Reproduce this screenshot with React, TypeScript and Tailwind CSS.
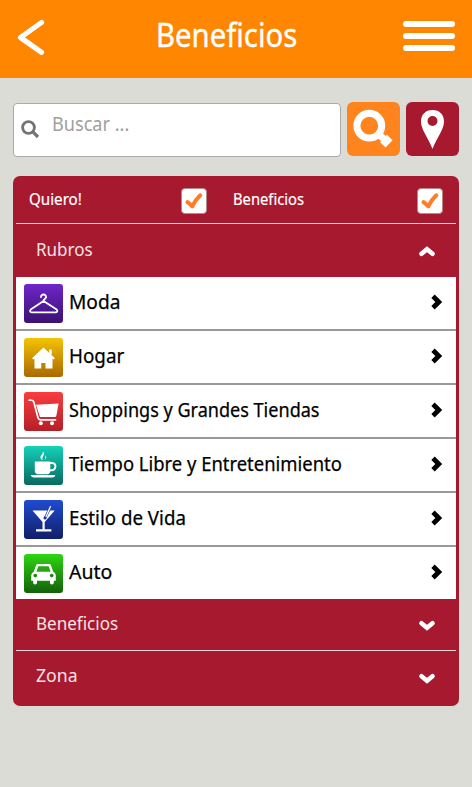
import { useLayoutEffect, useRef, useState, type ReactNode } from "react";

function Fit({ width, className, children }: { width: number; className: string; children: string }) {
  const ref = useRef<HTMLSpanElement>(null);
  const [scale, setScale] = useState(1);
  useLayoutEffect(() => {
    if (ref.current) setScale(width / ref.current.offsetWidth);
  }, [width]);
  return (
    <span
      ref={ref}
      className={`inline-block origin-left whitespace-nowrap [font-variant-ligatures:none] ${className}`}
      style={{ transform: `scaleX(${scale})` }}
    >
      {children}
    </span>
  );
}

function Check() {
  return (
    <span className="flex h-[26px] w-[26px] items-center justify-center rounded-[4px] border border-[#b98a86] bg-white">
      <svg width="20" height="20" viewBox="0 0 20 20" fill="none" stroke="#ff7d27" strokeWidth="4" strokeLinecap="round" strokeLinejoin="round">
        <path d="M3.500 11 8.300 15.200" />
        <path d="M8.300 15.200C10 11.500 12.500 8 16.300 4.300" />
      </svg>
    </span>
  );
}

function Chevron({ up = false }: { up?: boolean }) {
  return (
    <svg className={up ? "rotate-180" : ""} width="18" height="12" viewBox="0 0 18 12" fill="none" stroke="#fff" strokeWidth="4.600" strokeLinecap="round">
      <path d="M3.500 3.300 9 7.800 14.500 3.300" />
    </svg>
  );
}

const hanger = (
  <g fill="none" stroke="#fff" strokeWidth="1.8" strokeLinecap="round" strokeLinejoin="round">
    <path d="M17 13c.2-3.600 5.400-3.100 5.100.2-.2 1.900-2.600 1.900-2.600 3.800" />
    <path d="M19.500 17 6.700 25.600c-1.200 1-.7 2.700.8 2.700h24.400c1.500 0 2-1.700.8-2.700L19.500 17Z" />
  </g>
);
const house = (
  <g fill="#fff">
    <path d="M19.500 9.500 31 20.200l-1.500 1.400-10-8.600-10 8.600L8 20.200Z" />
    <path d="M10.500 18.800 19.500 11l9 7.800V30.500h-7v-5.600h-4.300v5.600h-6.700Z" />
    <path d="M25.200 11.500h2.600v5h-2.600Z" />
  </g>
);
const cart = (
  <g fill="#fff">
    <path d="M12 12.800 34.600 11.500l-2.200 12c-.2 1-1 1.600-2 1.600H16Z" />
    <path d="M5.200 8.200h2c1.500 0 2.200.5 2.600 1.900l4.200 15.600c.4 1.400 1.100 2.200 2.500 2.200h15" fill="none" stroke="#fff" strokeWidth="1.700" strokeLinecap="round" />
    <circle cx="16.800" cy="31.200" r="2" />
    <circle cx="28" cy="31.200" r="2" />
  </g>
);
const cup = (
  <g fill="#fff">
    <path d="M10.800 15.500h15.500v9.200c0 2.200-1.200 3.500-3.400 3.500h-8.700c-2.200 0-3.400-1.300-3.400-3.500Z" />
    <path d="M26 17.100h2.300c4.500 0 3.900 7.100-.8 7.100H26" fill="none" stroke="#fff" strokeWidth="2" />
    <path d="M6.800 29h24.600c-.3 1.600-1.300 2.400-3 2.400H10c-1.800 0-3-.8-3.200-2.400Z" />
    <path d="M18.700 14.200c-3.900-2.400-1.700-4.700-.4-6.300.7-1 .6-1.800.4-2.700 2 1.800 1.300 3.200.5 4.800-.8 1.400-1.200 2.500-.5 4.200Z" />
    <path d="M20.100 13.800c2-1.500 1.300-3 1-4.300 1.700 1.400 1.800 3.200-1 4.300Z" />
  </g>
);
const martini = (
  <g fill="#fff">
    <path d="M8.500 10.500h22.200L20.700 22v7.300h6.700v2.200H12v-2.200h6.500V22Z" />
    <path d="m20.800 18.500 5-10" fill="none" stroke="#1d3eb0" strokeWidth="2.600" />
    <path d="m21.800 17 4.800-10.800" fill="none" stroke="#fff" strokeWidth="1.300" />
    <circle cx="21" cy="18" r="1.500" fill="#1b369f" />
  </g>
);
const car = (
  <g>
    <path fill="#fff" d="M12 11.500c.4-1.100 1.100-1.500 2.200-1.500h10.600c1.100 0 1.800.4 2.200 1.500l2.300 6.500c1.600.7 2.500 1.900 2.500 3.700v5.100h-2v2c0 2.200-3.800 2.200-3.800 0v-2H13v2c0 2.200-3.800 2.200-3.800 0v-2h-2v-5.100c0-1.800.9-3 2.500-3.700Z" />
    <path fill="#23a713" d="m14.300 12.200-1.900 5.500h14.200l-1.900-5.500Z" />
    <circle cx="11.300" cy="21.600" r="1.800" fill="#1d8610" />
    <circle cx="27.700" cy="21.600" r="1.800" fill="#1d8610" />
  </g>
);

const rows: { label: string; width: number; tile: string; icon: ReactNode }[] = [
  { label: "Moda", width: 51, tile: "from-[#7025cb] to-[#3b1172]", icon: hanger },
  { label: "Hogar", width: 55, tile: "from-[#f4c400] to-[#ab6900]", icon: house },
  { label: "Shoppings y Grandes Tiendas", width: 251, tile: "from-[#fa3d40] to-[#b51f27]", icon: cart },
  { label: "Tiempo Libre y Entretenimiento", width: 273, tile: "from-[#15d2bb] to-[#086b5f]", icon: cup },
  { label: "Estilo de Vida", width: 117, tile: "from-[#204bd2] to-[#101f68]", icon: martini },
  { label: "Auto", width: 43, tile: "from-[#2ed711] to-[#14620a]", icon: car },
];

export default function App() {
  return (
    <div className="flex h-[787px] w-[472px] flex-col bg-[#dbdcd6] font-['Noto_Sans',sans-serif]">
      <header className="flex h-[78px] shrink-0 bg-[#ff8600] text-white">
        <svg className="mt-[18px] ml-4" width="30" height="40" viewBox="0 0 30 40" fill="none" stroke="#fff" strokeWidth="5.200" strokeLinecap="round" strokeLinejoin="round">
          <path d="M25.500 4.500 4.500 19.500l21 14.800" />
        </svg>
        <div className="ml-[110px] w-[247px]">
          <Fit width={141} className="text-[32px] leading-[69px] [-webkit-text-stroke:0.4px_white]">Beneficios</Fit>
        </div>
        <div className="mt-[21px] flex flex-col gap-[6px]">
          <span className="h-[6px] w-[52px] rounded-full bg-white" />
          <span className="h-[6px] w-[52px] rounded-full bg-white" />
          <span className="h-[6px] w-[52px] rounded-full bg-white" />
        </div>
      </header>

      <div className="mt-[24px] ml-[13px] flex h-[55px] shrink-0">
        <div className="mt-px flex h-[54px] w-[328px] rounded-[4px] border border-[#aaa] bg-white">
          <svg className="mt-[16px] ml-[7px] shrink-0" width="20" height="20" viewBox="0 0 20 20" fill="none" stroke="#747474">
            <circle cx="7.500" cy="7.500" r="5.900" strokeWidth="2.800" />
            <path d="m11.700 11.700 5.300 5.300" strokeWidth="3.200" />
          </svg>
          <div className="ml-[11px]">
            <Fit width={77} className="text-[20px] leading-[40px] text-[#a0a0a0]">Buscar ...</Fit>
          </div>
        </div>
        <button className="ml-[6px] flex h-[54px] w-[53px] rounded-[6px] bg-[#ff841d]">
          <svg width="53" height="54" viewBox="0 0 53 54" fill="none" stroke="#fff">
            <circle cx="22.300" cy="23.700" r="12.400" strokeWidth="7" />
            <path d="m31 31.500 8 7.500" strokeWidth="7" />
            <path d="m36.500 36.500 5.600 5.300" strokeWidth="10" />
          </svg>
        </button>
        <button className="ml-[6px] flex h-[54px] w-[53px] rounded-[6px] bg-[#a6192e]">
          <svg width="53" height="54" viewBox="0 0 53 54">
            <path d="M26.500 8C19.500 8 15 12.700 15 19.500c0 8.500 7.500 16.500 11.500 27.500 4-11 11.500-19 11.500-27.500C38 12.700 33.500 8 26.500 8Zm0 6a5 5 0 1 1 0 10 5 5 0 0 1 0-10Z" fill="#fff" fillRule="evenodd" />
          </svg>
        </button>
      </div>

      <main className="mt-[19px] ml-[13px] h-[530px] w-[446px] shrink-0 rounded-[7px] bg-[#a6192e] px-[3px] text-white">
        <div className="flex h-[48px] border-b border-[#eed5d8]">
          <div className="ml-[13px] w-[152px]">
            <Fit width={53} className="text-[16px] leading-[47px] [-webkit-text-stroke:0.2px_white]">Quiero!</Fit>
          </div>
          <div className="mt-[12px]"><Check /></div>
          <div className="ml-[26px] w-[184px]">
            <Fit width={71} className="text-[16px] leading-[47px] [-webkit-text-stroke:0.2px_white]">Beneficios</Fit>
          </div>
          <div className="mt-[12px]"><Check /></div>
        </div>
        <div className="flex h-[53px] justify-between pr-5 pl-[20px]">
          <Fit width={57} className="text-[18.500px] leading-[49px] text-[#f9e1e4]">Rubros</Fit>
          <div className="mt-[21px]"><Chevron up /></div>
        </div>
        <ul className="bg-white text-black">
          {rows.map((r, i) => (
            <li key={r.label} className={`flex border-[#999] ${i < 5 ? "h-[54px] border-b-2" : "h-[52px]"}`}>
              <div className={`mt-[7px] ml-[8px] h-[39px] w-[39px] rounded-[3px] bg-linear-to-b ${r.tile}`}>
                <svg width="39" height="39" viewBox="0 0 39 39">{r.icon}</svg>
              </div>
              <div className="ml-[6px] w-[361px]">
                <Fit width={r.width} className="text-[19.500px] leading-[49px] [-webkit-text-stroke:0.25px_black]">{r.label}</Fit>
              </div>
              <svg className="mt-[17px]" width="13" height="16" viewBox="0 0 13 16" fill="none" stroke="#000" strokeWidth="4.800">
                <path d="m3 2.300 5.800 5.700L3 13.700" />
              </svg>
            </li>
          ))}
        </ul>
        <div className="flex h-[52px] justify-between border-b border-[#eed5d8] pr-5 pl-[20px]">
          <Fit width={82} className="text-[18.500px] leading-[48px] text-[#f9e1e4]">Beneficios</Fit>
          <div className="mt-[21px]"><Chevron /></div>
        </div>
        <div className="flex justify-between pr-5 pl-[20px]">
          <Fit width={42} className="text-[18.500px] leading-[48px] text-[#f9e1e4]">Zona</Fit>
          <div className="mt-[22px]"><Chevron /></div>
        </div>
      </main>
    </div>
  );
}
